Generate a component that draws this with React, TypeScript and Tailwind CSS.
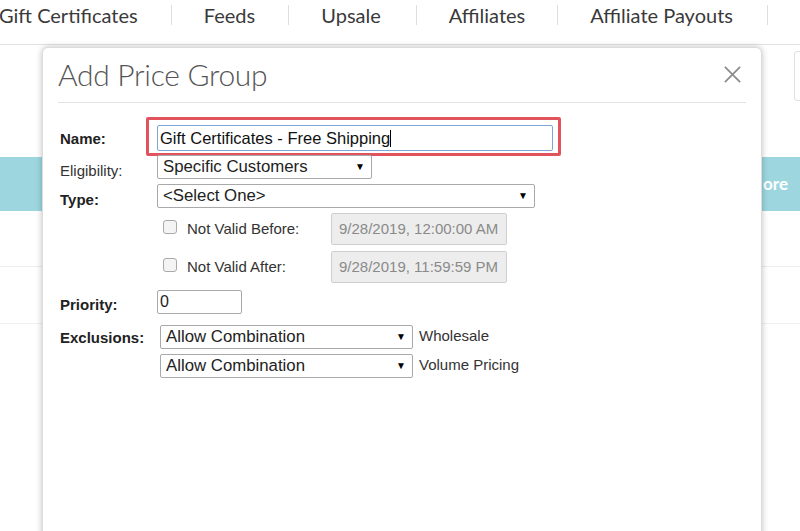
import React from "react";

const navItems: [string, string][] = [
  ["Gift Certificates", "w-[141px]"],
  ["Feeds", "w-[53px]"],
  ["Upsale", "w-[63px]"],
  ["Affiliates", "w-[77px]"],
  ["Affiliate Payouts", "w-[146px]"],
];

function Caret() {
  return <span className="text-[10px] leading-none text-black">▼</span>;
}

function Select({ value, w }: { value: string; w: string }) {
  return (
    <div
      className={`${w} h-[24px] border border-[#a9a9a9] rounded-[2px] bg-white flex items-center justify-between pl-[5px] pr-[6px] text-[16.8px] text-[#222]`}
    >
      <span>{value}</span>
      <Caret />
    </div>
  );
}

export default function App() {
  return (
    <div className="relative w-[800px] h-[531px] overflow-hidden bg-white" style={{ fontFamily: "Lato, 'Liberation Sans', sans-serif" }}>
      {/* background page */}
      <div className="h-[45px] border-b border-[#e3e3e3] flex items-start pt-[3px] text-[20px] text-[#3a3a3a] -ml-[1px]">
        {navItems.map(([n, w]) => (
          <React.Fragment key={n}>
            <span className={`${w} whitespace-nowrap leading-[24px]`}>{n}</span>
            <span className="mx-[32px] mt-[2px] w-px h-[20px] bg-[#dedede]" />
          </React.Fragment>
        ))}
      </div>
      <div className="flex justify-end pt-[6px]">
        <div className="w-[6px] h-[50px] border border-[#e0e0e0] rounded-l-[4px] border-r-0" />
      </div>
      <div className="mt-[56px] h-[54px] bg-[#9dd6de] flex items-center justify-end pr-[12px] text-white font-bold text-[17px]">
        ore
      </div>
      <div className="h-[56px] border-b border-[#ececec]" />
      <div className="h-[57px] border-b border-[#f0f0f0]" />

      {/* modal */}
      <div className="absolute left-[42px] top-[47px] w-[720px] h-[500px] bg-white rounded-t-[6px] border border-[#dcdcdc] shadow-[0_0_6px_rgba(0,0,0,0.25)]">
        <div className="mx-[15px] h-[55px] border-b border-[#e2e2e2] flex items-center justify-between">
          <span className="text-[30px] font-light text-[#555] tracking-[-0.3px] -mt-[2px]">Add Price Group</span>
          <svg width="19" height="19" viewBox="0 0 20 20" className="mr-[4px] -mt-[2px]">
            <path d="M2 2 L18 18 M18 2 L2 18" stroke="#8a8a8a" strokeWidth="1.8" />
          </svg>
        </div>

        <div className="pl-[17px] pt-[14px] text-[15px] text-[#222]" style={{ fontFamily: "'Liberation Sans', Arial, sans-serif" }}>
          {/* Name */}
          <div className="flex items-center h-[39px]">
            <span className="w-[89px] font-bold mt-[6px]">Name:</span>
            <div className="border-[3px] border-[#e2545d] rounded-[2px] p-[5px] pb-[2px] pt-[5px] pl-[8px] -ml-[3px]">
              <div className="w-[396px] h-[26px] border border-[#7ea6d6] rounded-[2px] flex items-center pl-[2px] text-[16.5px] text-[#111]">
                Gift Certificates - Free Shipping<span className="w-px h-[17px] bg-black" />
              </div>
            </div>
          </div>
          {/* Eligibility */}
          <div className="flex items-center h-[24px] mt-[-1px]">
            <span className="w-[97px] text-[#333] mt-[8px]">Eligibility:</span>
            <Select value="Specific Customers" w="w-[215px]" />
          </div>
          {/* Type */}
          <div className="flex items-center h-[24px] mt-[5px]">
            <span className="w-[97px] font-bold mt-[8px]">Type:</span>
            <Select value="<Select One>" w="w-[378px]" />
          </div>
          {/* Not valid before */}
          <div className="flex items-center mt-[5px] ml-[103px]">
            <span className="w-[14px] h-[14px] border border-[#aaa] rounded-[3px] bg-[#f4f4f4] -mt-[4px]" />
            <span className="ml-[10px] w-[144px] text-[#333]">Not Valid Before:</span>
            <div className="w-[176px] h-[32px] border border-[#cfcfcf] rounded-[2px] bg-[#ededed] flex items-center pl-[7px] text-[#8a8a8a]">
              9/28/2019, 12:00:00 AM
            </div>
          </div>
          <div className="flex items-center mt-[6px] ml-[103px]">
            <span className="w-[14px] h-[14px] border border-[#aaa] rounded-[3px] bg-[#f4f4f4] -mt-[4px]" />
            <span className="ml-[10px] w-[144px] text-[#333]">Not Valid After:</span>
            <div className="w-[176px] h-[32px] border border-[#cfcfcf] rounded-[2px] bg-[#ededed] flex items-center pl-[7px] text-[#8a8a8a]">
              9/28/2019, 11:59:59 PM
            </div>
          </div>
          {/* Priority */}
          <div className="flex items-center mt-[5px]">
            <span className="w-[97px] font-bold mt-[6px]">Priority:</span>
            <div className="w-[85px] h-[24px] border border-[#a9a9a9] rounded-[2px] flex items-center pl-[2px] text-[16px]">0</div>
          </div>
          {/* Exclusions */}
          <div className="flex mt-[8px]">
            <span className="w-[100px] font-bold mt-[2px]">Exclusions:</span>
            <div className="flex flex-col gap-[5px]">
              <div className="flex items-center">
                <Select value="Allow Combination" w="w-[253px]" />
                <span className="ml-[6px] text-[#333]">Wholesale</span>
              </div>
              <div className="flex items-center">
                <Select value="Allow Combination" w="w-[253px]" />
                <span className="ml-[6px] text-[#333]">Volume Pricing</span>
              </div>
            </div>
          </div>
        </div>
      </div>
    </div>
  );
}
